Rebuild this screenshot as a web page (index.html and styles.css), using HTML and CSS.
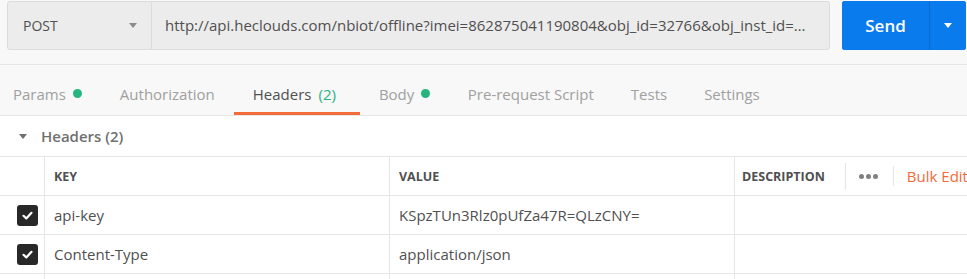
FILE: index.html
```html
<!DOCTYPE html>
<html lang="en">
<head>
  <meta charset="UTF-8" />
  <title>Request</title>
  <link rel="stylesheet" href="styles.css">
</head>
<body>
  <div class="request-bar">
    <div class="url-group">
      <div class="method">
        <span>POST</span>
        <span class="caret"></span>
      </div>
      <div class="url">http://api.heclouds.com/nbiot/offline?imei=862875041190804&amp;obj_id=32766&amp;obj_inst_id=0&amp;mode=2</div>
    </div>
    <div class="send">
      <button class="send-main">Send</button>
      <button class="send-more"><span class="caret white"></span></button>
    </div>
  </div>

  <div class="tabs">
    <div class="tab">Params <span class="dot"></span></div>
    <div class="tab">Authorization</div>
    <div class="tab active">Headers <span class="count">(2)</span></div>
    <div class="tab">Body <span class="dot"></span></div>
    <div class="tab">Pre-request Script</div>
    <div class="tab">Tests</div>
    <div class="tab">Settings</div>
  </div>

  <div class="section-title">
    <span class="caret dark"></span>
    <span>Headers (2)</span>
  </div>

  <div class="table">
    <div class="row head">
      <div class="cell check"></div>
      <div class="cell key">KEY</div>
      <div class="cell value">VALUE</div>
      <div class="cell desc">
        <span>DESCRIPTION</span>
        <span class="tools">
          <span class="sep"></span>
          <span class="more"><i></i><i></i><i></i></span>
          <span class="sep short"></span>
          <span class="bulk">Bulk Edit</span>
        </span>
      </div>
    </div>
    <div class="row">
      <div class="cell check"><span class="box"><svg width="13" height="13" viewBox="0 0 13 13"><path d="M2.5 6.8 L5.3 9.4 L10.5 3.8" fill="none" stroke="#fff" stroke-width="2.2" stroke-linecap="round" stroke-linejoin="round"/></svg></span></div>
      <div class="cell key">api-key</div>
      <div class="cell value">KSpzTUn3Rlz0pUfZa47R=QLzCNY=</div>
      <div class="cell desc"></div>
    </div>
    <div class="row">
      <div class="cell check"><span class="box"><svg width="13" height="13" viewBox="0 0 13 13"><path d="M2.5 6.8 L5.3 9.4 L10.5 3.8" fill="none" stroke="#fff" stroke-width="2.2" stroke-linecap="round" stroke-linejoin="round"/></svg></span></div>
      <div class="cell key">Content-Type</div>
      <div class="cell value">application/json</div>
      <div class="cell desc"></div>
    </div>
    <div class="row">
      <div class="cell check"></div>
      <div class="cell key"></div>
      <div class="cell value"></div>
      <div class="cell desc"></div>
    </div>
  </div>
</body>
</html>
```

FILE: styles.css
```css
body {
  margin: 0;
  background: #fff;
  font-family: 'Open Sans', sans-serif;
  font-size: 15px;
  color: #505050;
  overflow: hidden;
}

.request-bar {
  display: flex;
  background: #f8f8f8;
  padding: 1px 1px 14px 7px;
  border-bottom: 1px solid #e6e6e6;
}

.url-group {
  display: flex;
  width: 821px;
  height: 47px;
  background: #ececec;
  border: 1px solid #dcdcdc;
  border-radius: 3px;
}

.method {
  width: 144px;
  box-sizing: border-box;
  display: flex;
  align-items: center;
  justify-content: space-between;
  padding: 0 14px 0 15px;
  border-right: 1px solid #dcdcdc;
  color: #505050;
  font-size: 14px;
}

.caret {
  display: inline-block;
  width: 0;
  height: 0;
  border-left: 4px solid transparent;
  border-right: 4px solid transparent;
  border-top: 5px solid #8a8a8a;
}
.caret.white { border-top-color: #fff; }
.caret.dark { border-top-color: #707070; }

.url {
  flex: 1;
  min-width: 0;
  padding: 0 20px 0 13px;
  white-space: nowrap;
  overflow: hidden;
  text-overflow: ellipsis;
  line-height: 47px;
  color: #505050;
}

.send {
  display: flex;
  margin-left: 12px;
  height: 49px;
  border-radius: 3px;
  overflow: hidden;
  background: #097bed;
}

.send button {
  border: none;
  background: #097bed;
  color: #fff;
  font-family: 'Open Sans', sans-serif;
  cursor: pointer;
  padding: 0;
}

.send-main {
  width: 88px;
  font-size: 17px;
  font-weight: 600;
  border-right: 1px solid #0a6ad0 !important;
}

.send-more {
  width: 36px;
  display: flex;
  align-items: center;
  justify-content: center;
}

.tabs {
  display: flex;
  background: #f8f8f8;
  height: 50px;
  border-bottom: 1px solid #e6e6e6;
}

.tab {
  display: flex;
  align-items: center;
  gap: 7px;
  padding: 10px 19px 0;
  color: #a0a0a0;
  border-bottom: 3px solid transparent;
}

.tab:first-child {
  padding-left: 13px;
}

.tab.active {
  color: #505050;
  border-bottom-color: #f26b3a;
  padding-right: 24px;
}

.tab.active + .tab ~ .tab {
  padding-left: 18.5px;
  padding-right: 18.5px;
}

.count { color: #26b47f; }

.dot {
  width: 9px;
  height: 9px;
  border-radius: 50%;
  background: #26b47f;
}

.section-title {
  display: flex;
  align-items: center;
  gap: 14px;
  height: 40px;
  padding-left: 19px;
  font-weight: 600;
  color: #707070;
}

.table {
  border-top: 1px solid #e6e6e6;
}

.row {
  display: grid;
  grid-template-columns: 44px 345px 345px 1fr;
  height: 38px;
  border-bottom: 1px solid #e6e6e6;
}

.row.head {
  font-size: 12.5px;
  font-weight: 700;
  color: #505050;
}

.cell {
  display: flex;
  align-items: center;
  padding-left: 9px;
  border-left: 1px solid #e6e6e6;
  white-space: nowrap;
}

.cell.check {
  border-left: none;
  padding-left: 17px;
}

.box {
  width: 21px;
  height: 21px;
  background: #282828;
  border-radius: 3px;
  display: flex;
  align-items: center;
  justify-content: center;
}

.desc {
  padding-left: 7px;
}

.tools {
  display: flex;
  align-items: center;
  margin-left: 20px;
  gap: 13px;
  font-weight: 400;
}

.sep {
  width: 1px;
  height: 27px;
  background: #e6e6e6;
}

.sep.short {
  height: 20px;
  margin-left: 2px;
}

.more {
  display: flex;
  gap: 2px;
}

.more i {
  width: 5px;
  height: 5px;
  border-radius: 50%;
  background: #808080;
}

.bulk {
  color: #f26b3a;
  font-size: 15px;
}
```
